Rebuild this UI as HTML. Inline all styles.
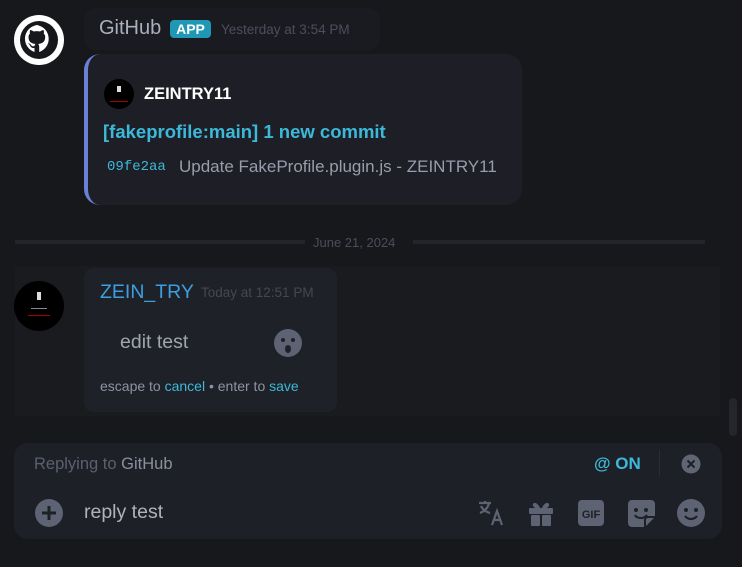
<!DOCTYPE html>
<html><head><meta charset="utf-8"><style>
body{margin:0;width:742px;height:567px;background:#17181c;font-family:"Liberation Sans",sans-serif;position:relative;overflow:hidden}
.a{position:absolute;white-space:nowrap}
</style></head><body>
<div class="a" style="left:84px;top:8px;width:296px;height:42px;background:#1a1b20;border-radius:12px"></div>
<svg class="a" style="left:14px;top:15px" width="50" height="50" viewBox="0 0 50 50"><circle cx="25" cy="25" r="25" fill="#fff"/><circle cx="25" cy="25" r="19" fill="#17181c"/><path d="M25 10c-8 0-14 6-14 14 0 6 4 11 9.5 13v-4c-3 .5-4-1.5-4.5-2.5s-1-1.5-2-2c1-.5 2.5.5 3 1.5 1 1.5 2.5 1.5 3.5 1 .2-1 .5-1.5 1-2-4-.5-7-2-7-7 0-1.5.5-2.5 1.5-3.5-.2-.5-.5-2 .2-3.5 0 0 1.3 0 3.5 1.5a12 12 0 0 1 6.3 0c2.2-1.5 3.5-1.5 3.5-1.5.7 1.5.4 3 .2 3.5 1 1 1.5 2 1.5 3.5 0 5-3 6.5-7 7 .5.5 1 1.5 1 3V37c5.5-2 9.5-7 9.5-13 0-8-6-14-14-14z" fill="#fff"/></svg>
<div class="a" style="left:99px;top:17px;font-size:20px;color:#a9afbb">GitHub</div>
<div class="a" style="left:170px;top:20px;width:41px;height:18px;background:#1f97b5;border-radius:4px;color:#fff;font-weight:bold;font-size:14px;text-align:center;line-height:18px">APP</div>
<div class="a" style="left:221px;top:22px;font-size:13.5px;color:#4b4f5b">Yesterday at 3:54 PM</div>
<div class="a" style="left:84px;top:54px;width:438px;height:151px;background:#1e1f26;border-radius:16px;border-left:4px solid #6b80d6;box-sizing:border-box"></div>
<div class="a" style="left:104px;top:79px;width:30px;height:30px;background:#000;border-radius:50%"></div>
<div class="a" style="left:117px;top:86px;width:4px;height:6px;background:#ddd"></div>
<div class="a" style="left:110px;top:101px;width:18px;height:1px;background:#a00"></div>
<div class="a" style="left:144px;top:85px;font-size:16.5px;font-weight:bold;color:#fff">ZEINTRY11</div>
<div class="a" style="left:103px;top:121px;font-size:18.5px;font-weight:bold;color:#3cb9d9">[fakeprofile:main] 1 new commit</div>
<div class="a" style="left:107px;top:159px;font-family:'Liberation Mono',monospace;font-size:14px;color:#3cb9d9">09fe2aa</div>
<div class="a" style="left:179px;top:157px;font-size:17px;color:#979dab">Update FakeProfile.plugin.js - ZEINTRY11</div>
<div class="a" style="left:15px;top:240px;width:290px;height:4px;background:#23252b"></div>
<div class="a" style="left:413px;top:240px;width:292px;height:4px;background:#23252b"></div>
<div class="a" style="left:313px;top:235px;font-size:13px;color:#4a4e5b">June 21, 2024</div>
<div class="a" style="left:15px;top:266px;width:705px;height:150px;background:#1a1b1f"></div>
<div class="a" style="left:84px;top:268px;width:253px;height:144px;background:#1f2129;border-radius:10px"></div>
<div class="a" style="left:14px;top:281px;width:50px;height:50px;background:#000;border-radius:50%"></div>
<div class="a" style="left:37px;top:292px;width:4px;height:8px;background:#ddd"></div>
<div class="a" style="left:31px;top:308px;width:16px;height:1px;background:#888"></div>
<div class="a" style="left:28px;top:315px;width:22px;height:1px;background:#a00"></div>
<div class="a" style="left:100px;top:281px;font-size:19.5px;color:#3b9fe2">ZEIN_TRY</div>
<div class="a" style="left:201px;top:285px;font-size:13.5px;color:#444854">Today at 12:51 PM</div>
<div class="a" style="left:120px;top:331px;font-size:19.5px;color:#a0a5b0">edit test</div>
<svg class="a" style="left:273px;top:328px" width="30" height="30"><circle cx="15" cy="15" r="14" fill="#5d6373"/><circle cx="10" cy="12" r="2" fill="#1f2129"/><circle cx="20" cy="12" r="2" fill="#1f2129"/><ellipse cx="15" cy="21" rx="3" ry="4" fill="#1f2129"/></svg>
<div class="a" style="left:100px;top:378px;font-size:14px;color:#8d93a0">escape to <span style="color:#3cb9d9">cancel</span> • enter to <span style="color:#3cb9d9">save</span></div>
<div class="a" style="left:729px;top:398px;width:8px;height:38px;background:#24262c;border-radius:4px"></div>
<div class="a" style="left:14px;top:443px;width:708px;height:96px;background:#1e2028;border-radius:14px"></div>
<div class="a" style="left:34px;top:455px;font-size:16.5px;color:#5b606d">Replying to <span style="color:#8a909c">GitHub</span></div>
<div class="a" style="left:594px;top:454px;font-size:17px;font-weight:bold;color:#3cb9d9">@ ON</div>
<div class="a" style="left:659px;top:450px;width:1px;height:27px;background:#2a2c34"></div>
<svg class="a" style="left:681px;top:454px" width="20" height="20"><circle cx="10" cy="10" r="9.5" fill="#5f6573"/><path d="M6.5 6.5l7 7M13.5 6.5l-7 7" stroke="#1e2028" stroke-width="2"/></svg>
<svg class="a" style="left:35px;top:499px" width="28" height="28"><circle cx="14" cy="14" r="14" fill="#5d6372"/><path d="M14 7v14M7 14h14" stroke="#1e2028" stroke-width="3"/></svg>
<div class="a" style="left:84px;top:501px;font-size:19.5px;color:#aeb3bd">reply test</div>
<svg class="a" style="left:477px;top:499px" width="28" height="28" fill="none" stroke="#5d6372" stroke-width="2.2"><path d="M2 4h12M8 2v2M4 7c2 4 5 6 9 7M12 4c-1 5-4 8-9 10"/><path d="M15 26l5-14 5 14M17 21h6"/></svg>
<svg class="a" style="left:528px;top:499px" width="26" height="28" fill="#5d6372"><rect x="1" y="9" width="24" height="6" rx="1"/><rect x="3" y="16" width="9" height="11" rx="1"/><rect x="14" y="16" width="9" height="11" rx="1"/><path d="M12 9C9 2 4 3 5 7l2 2zM14 9c3-7 8-6 7-2l-2 2z"/></svg>
<svg class="a" style="left:578px;top:500px" width="26" height="26"><rect width="26" height="26" rx="4" fill="#5d6372"/><text x="13" y="18" text-anchor="middle" font-family="Liberation Sans" font-weight="bold" font-size="11" fill="#1e2028">GIF</text></svg>
<svg class="a" style="left:628px;top:500px" width="27" height="27"><path d="M4 0h19a4 4 0 0 1 4 4v13l-10 10H4a4 4 0 0 1-4-4V4a4 4 0 0 1 4-4z" fill="#5d6372"/><circle cx="8" cy="10" r="2" fill="#1e2028"/><circle cx="18" cy="10" r="2" fill="#1e2028"/><path d="M7 15c2 4 9 4 12 0" stroke="#1e2028" stroke-width="2" fill="none"/><path d="M17 27v-7a3 3 0 0 1 3-3h7" stroke="#1e2028" stroke-width="2" fill="none"/></svg>
<svg class="a" style="left:677px;top:499px" width="28" height="28"><circle cx="14" cy="14" r="14" fill="#5d6372"/><circle cx="9" cy="11" r="2" fill="#1e2028"/><circle cx="19" cy="11" r="2" fill="#1e2028"/><path d="M8 17c3 4 9 4 12 0" stroke="#1e2028" stroke-width="2.2" fill="none"/></svg>
</body></html>
